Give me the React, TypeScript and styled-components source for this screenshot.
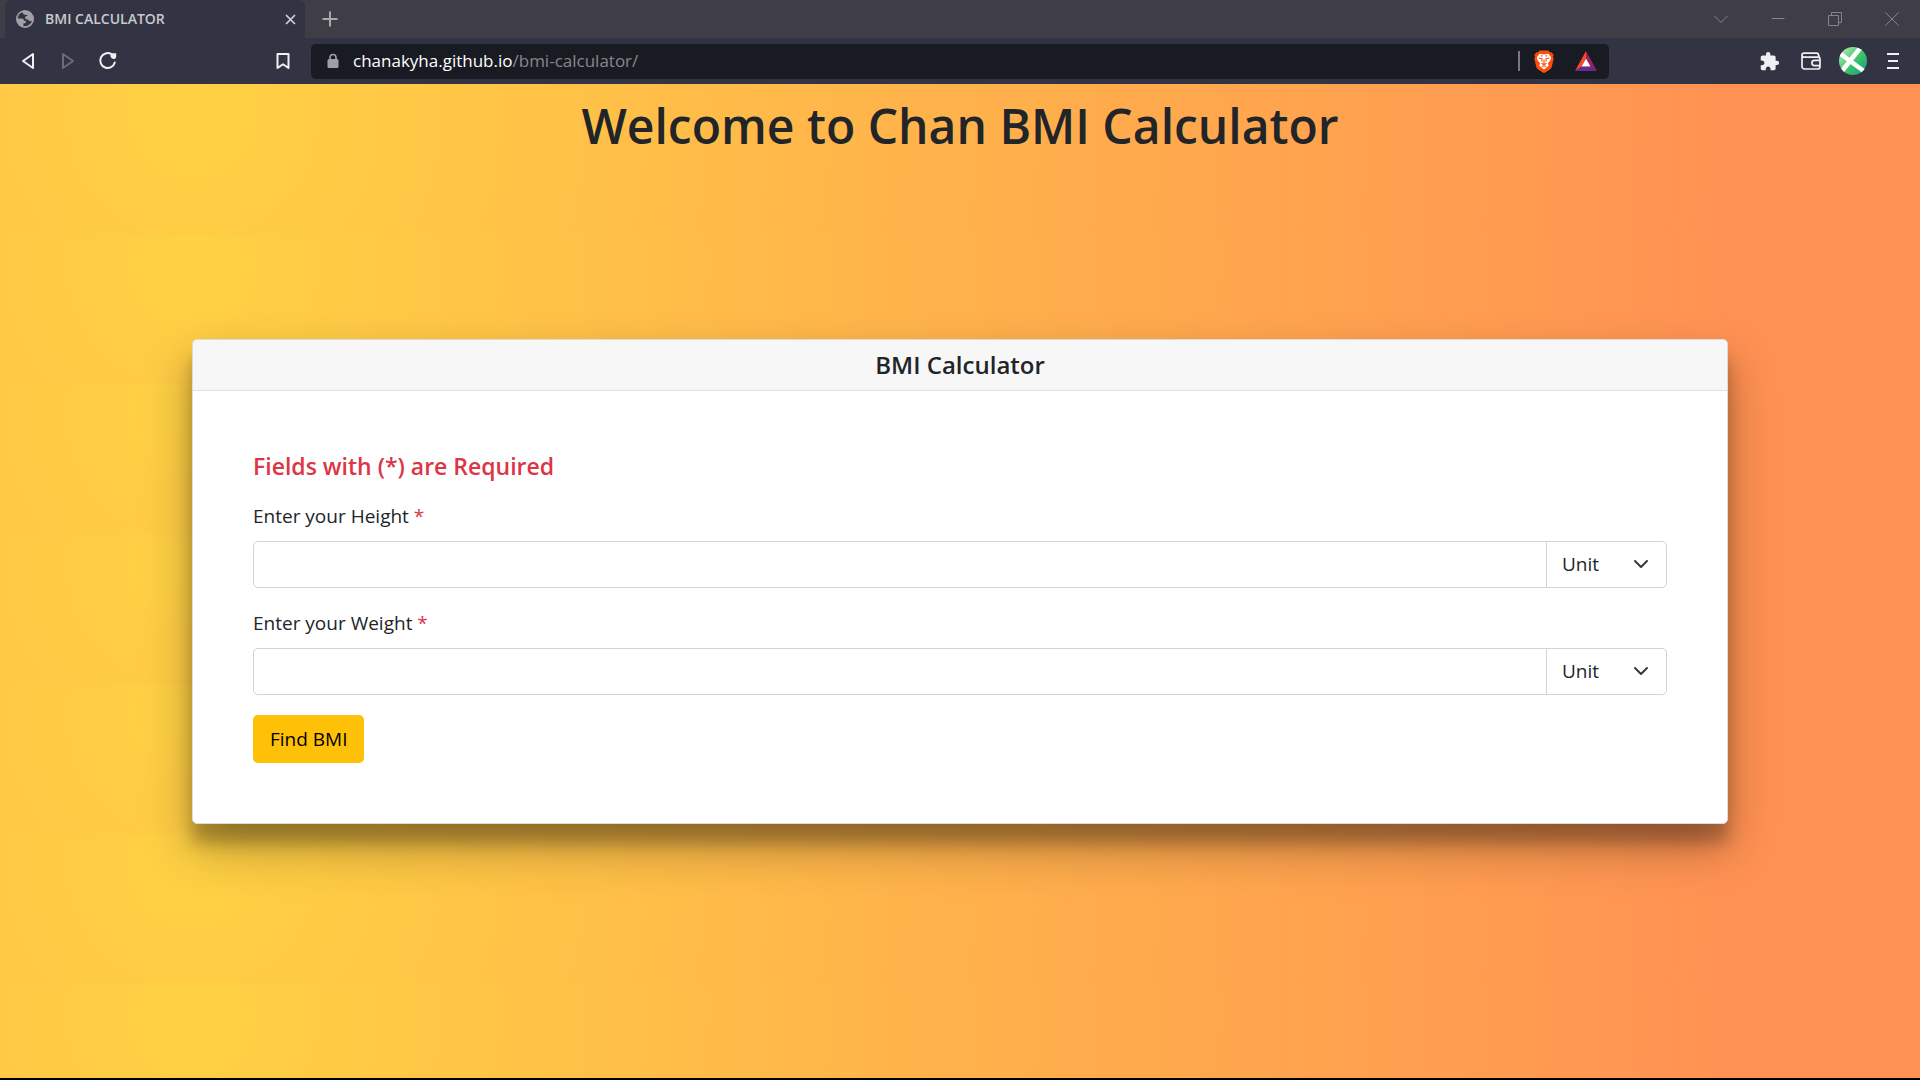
import React, { useState } from "react";
import styled, { createGlobalStyle } from "styled-components";

const GlobalStyle = createGlobalStyle`
  *, *::before, *::after { box-sizing: border-box; }
  body {
    margin: 0;
    color: #212529;
    font-family: "Open Sans", "Noto Sans", sans-serif;
    font-size: 19px;
    line-height: 30px;
  }
  h1, h2, h3 { margin: 0; font-weight: 600; }
`;

const Page = styled.div`
  min-height: 100vh;
  display: flex;
  flex-direction: column;
  border-bottom: 2px solid #000;
`;

const IconButton = styled.button<{ $w?: number; $color?: string }>`
  width: ${(p) => p.$w ?? 40}px;
  height: 38px;
  flex: none;
  padding: 0;
  border: 0;
  background: none;
  color: ${(p) => p.$color ?? "#f0f0f2"};
  display: flex;
  align-items: center;
  justify-content: center;
`;

const TabStrip = styled.div`
  height: 38px;
  padding-left: 5px;
  display: flex;
  align-items: center;
  background: #3f3e46;
`;

const Tab = styled.div`
  width: 300px;
  height: 38px;
  padding-left: 11px;
  display: flex;
  align-items: center;
  gap: 11px;
  border-radius: 6px 6px 0 0;
  background: #323443;
`;

const TabTitle = styled.span`
  flex: 1;
  color: #c9cacd;
  font-size: 14px;
  font-weight: 600;
  line-height: 20px;
`;

const Spacer = styled.div`
  flex: 1;
`;

const Toolbar = styled.div`
  height: 46px;
  display: grid;
  grid-template-columns: 311px 1fr 311px;
  align-items: center;
  background: #323443;
`;

const ToolGroup = styled.div<{ $end?: boolean }>`
  display: flex;
  align-items: center;
  justify-content: ${(p) => (p.$end ? "flex-end" : "flex-start")};
  padding: 0 8px;
`;

const Address = styled.div`
  height: 35px;
  padding: 0 2px 0 16px;
  display: flex;
  align-items: center;
  border-radius: 5px;
  background: #181b22;
`;

const Url = styled.div`
  flex: 1;
  margin-left: 14px;
  color: #86888c;
  font-size: 17px;
  line-height: 24px;
  outline: none;
`;

const Host = styled.span`
  color: #fff;
`;

const Divider = styled.div`
  width: 2px;
  height: 20px;
  margin-right: 3px;
  background: #77797e;
`;

const Main = styled.main`
  flex: 1;
  display: grid;
  grid-template-rows: 1fr auto 1fr;
  justify-items: center;
  background: radial-gradient(circle at 10% 20%, rgb(255, 209, 67) 0%, rgb(255, 145, 83) 90%) 0 0 / 100% 150px;
`;

const PageTitle = styled.h1`
  padding-top: 12px;
  font-size: 48px;
  line-height: 60px;
  text-align: center;
`;

const Card = styled.section`
  width: 80%;
  border: 1px solid #dcdcdc;
  border-radius: 5px;
  background: #fff;
  box-shadow: 0 24px 48px rgba(0, 0, 0, 0.3), 0 19px 15px rgba(0, 0, 0, 0.22);
`;

const CardTitle = styled.h2`
  padding: 10px;
  border-bottom: 1px solid #dfdfdf;
  border-radius: 4px 4px 0 0;
  background: #f7f7f7;
  font-size: 24px;
  line-height: 30px;
  text-align: center;
`;

const Form = styled.form`
  padding: 60px;
  display: flex;
  flex-direction: column;
  align-items: stretch;
  gap: 20px;
`;

const Notice = styled.h3`
  color: #dc3545;
  font-size: 23px;
  line-height: 30px;
`;

const Field = styled.div`
  display: flex;
  flex-direction: column;
  gap: 10px;
`;

const Star = styled.span`
  color: #dc3545;
`;

const InputGroup = styled.div`
  height: 47px;
  display: flex;
`;

const TextInput = styled.input`
  flex: 1;
  min-width: 0;
  padding: 0 15px;
  border: 1px solid #ced4da;
  border-radius: 5px 0 0 5px;
  background: #fff;
  color: inherit;
  font: inherit;
`;

const UnitSelect = styled.select`
  width: 121px;
  margin-left: -1px;
  padding: 0 45px 0 15px;
  border: 1px solid #ced4da;
  border-radius: 0 5px 5px 0;
  color: inherit;
  font: inherit;
  appearance: none;
  background: #fff
    url("data:image/svg+xml,%3csvg xmlns='http://www.w3.org/2000/svg' viewBox='0 0 16 16'%3e%3cpath fill='none' stroke='%23343a40' stroke-linecap='round' stroke-linejoin='round' stroke-width='2' d='M2 5l6 6 6-6'/%3e%3c/svg%3e")
    no-repeat right 17px center / 16px 16px;
`;

const SubmitButton = styled.button`
  align-self: flex-start;
  height: 48px;
  padding: 0 17px;
  border: 0;
  border-radius: 5px;
  background: #ffc107;
  color: #000;
  font: inherit;
`;

const Globe = () => (
  <svg width="18" height="18" viewBox="0 0 18 18">
    <circle cx="9" cy="9" r="9" fill="#9fa1a9" />
    <path d="M6.2 2.2C3.4 3.2 1.8 5.6 1.8 8.6l3.7 0c1.5 0 2.4.9 2.4 2.2h1.9v2.4H7.4v2.8c4 .8 7.8-1.8 8.5-5.3-1.1.7-2.6.6-3.4-.5-.5-.8-1.6-.6-2.7-1.2-1-.6-.9-2.2.2-2.7.6-.3 1.4 0 1.5-.8 0-.7-1.6-.5-2.6-.7-1.4-.3-2.2-1.5-2.7-2.6z" fill="#323443" />
  </svg>
);

const Back = ({ flip }: { flip?: boolean }) => (
  <svg width="14" height="18" viewBox="0 0 14 18" fill="none" stroke="currentColor" strokeWidth="2" strokeLinejoin="round">
    <path d={flip ? "M2 2v14l10-7z" : "M12 2v14L2 9z"} />
  </svg>
);

const Reload = () => (
  <svg width="20" height="20" viewBox="0 0 20 20" fill="none" stroke="currentColor" strokeWidth="2">
    <path d="M13.5 3.2A7.4 7.4 0 1 0 16.8 11.5" strokeLinecap="round" />
    <path d="M12.4 4.6c0-1.4 1-2.4 2.4-2.4h3.4v3.2c0 1.6-1.2 2.6-2.8 2.6s-3-1.6-3-3.4z" fill="currentColor" stroke="none" />
  </svg>
);

const BookmarkIcon = () => (
  <svg width="14" height="18" viewBox="0 0 14 18" fill="none" stroke="currentColor" strokeWidth="2" strokeLinejoin="round">
    <path d="M1.5 2h11v14L7 12.2 1.5 16z" />
  </svg>
);

const Lock = () => (
  <svg width="12" height="16" viewBox="0 0 12 16">
    <path d="M3 7V4.5a3 3 0 0 1 6 0V7" fill="none" stroke="#9d9fa7" strokeWidth="1.6" />
    <rect x="0.5" y="6" width="11" height="9" rx="1.5" fill="#9d9fa7" />
  </svg>
);

const Brave = () => (
  <svg width="20" height="23" viewBox="0 0 20 23">
    <path d="M5.8.5h8.4l1.9 2.1 1.6-.2 1.9 2.3-.7 1.9.8 2.1-2 8.3c-.3 1-.8 1.7-1.6 2.3l-4.9 3.2c-.8.5-1.6.5-2.4 0L3.9 19.3c-.8-.6-1.3-1.3-1.6-2.3L.3 8.7l.8-2.1L.4 4.7l1.9-2.3 1.6.2z" fill="#fb4f10" />
    <path d="M10 4.4l2.7-.5 1.6-.2 2.9 3.7-.5 1.3.2.9-3.1 3.9 1 2-4.8 3.9-4.8-3.9 1-2-3.1-3.9.2-.9-.5-1.3 2.9-3.7 1.6.2z" fill="#fff" />
    <path d="M4.6 8l3.3.8.2 2.8M15.4 8l-3.3.8-.2 2.8M6.8 5.6l1.7.7M13.2 5.6l-1.7.7M10 9.5v4.5M7.5 13.3L10 14.8l2.5-1.5M8 16.8l2-1.3 2 1.3" fill="none" stroke="#fb4f10" strokeWidth="1.1" />
  </svg>
);

const Bat = () => (
  <svg width="22" height="20" viewBox="0 0 22 20">
    <path d="M11 0v7L6.5 15.5 0 20z" fill="#ff4724" />
    <path d="M11 0l11 20-6.5-4.5L11 7z" fill="#9e1f63" />
    <path d="M0 20l6.5-4.5h9L22 20z" fill="#662d91" />
    <path d="M11 7.5l4.5 8h-9z" fill="#fff" />
  </svg>
);

const Puzzle = () => (
  <svg width="21" height="21" viewBox="0 0 24 24" fill="currentColor">
    <path d="M20.5 11H19V7c0-1.1-.9-2-2-2h-4V3.5a2.5 2.5 0 0 0-5 0V5H4c-1.1 0-2 .9-2 2v3.8h1.5c1.5 0 2.7 1.2 2.7 2.7S5 16.2 3.5 16.2H2V20c0 1.1.9 2 2 2h3.8v-1.5c0-1.5 1.2-2.7 2.7-2.7s2.7 1.2 2.7 2.7V22H17c1.1 0 2-.9 2-2v-4h1.5a2.5 2.5 0 0 0 0-5z" />
  </svg>
);

const WalletIcon = () => (
  <svg width="20" height="18" viewBox="0 0 20 18" fill="none" stroke="currentColor" strokeWidth="1.7">
    <path d="M18 5.5V4a2 2 0 0 0-1-1.2M1 3v11.5A2.5 2.5 0 0 0 3.5 17h13a2.5 2.5 0 0 0 2.5-2.5V7.2a2 2 0 0 0-2-2H3A2 2 0 0 1 3 1.2h12.5a2 2 0 0 1 2 2" />
    <path d="M19 8.4h-5.5a2.6 2.6 0 0 0 0 5.2H19" />
  </svg>
);

const Avatar = () => (
  <svg width="28" height="28" viewBox="0 0 28 28">
    <defs>
      <linearGradient id="leaf" x1="0" y1="0" x2="1" y2="1">
        <stop offset="0" stopColor="#c4edc4" />
        <stop offset="0.5" stopColor="#45c767" />
        <stop offset="1" stopColor="#0c9a83" />
      </linearGradient>
      <clipPath id="round">
        <circle cx="14" cy="14" r="14" />
      </clipPath>
    </defs>
    <g clipPath="url(#round)">
      <rect width="28" height="28" fill="url(#leaf)" />
      <path d="M-1 5L26 25M22 0L3 24" stroke="#fff" strokeWidth="4.6" />
    </g>
  </svg>
);

const MenuIcon = () => (
  <svg width="12" height="18" viewBox="0 0 12 18" stroke="currentColor" strokeWidth="2">
    <path d="M0 2h12M1 9h10M0 16h12" />
  </svg>
);

const Glyph = ({ d, size = 14, width = 1 }: { d: string; size?: number; width?: number }) => (
  <svg width={size} height={size} viewBox={`0 0 ${size} ${size}`} fill="none" stroke="currentColor" strokeWidth={width}>
    <path d={d} />
  </svg>
);

const WINDOW_BUTTONS = [
  { label: "Search tabs", d: "M.5 4l6.5 6.5L13.5 4" },
  { label: "Minimize", d: "M.5 6.5h13" },
  { label: "Restore", d: "M.5 3.5h10v10h-10zM3.5 3.5v-3h10v10h-3" },
  { label: "Close", d: "M.5 .5l13 13M13.5 .5l-13 13" },
];

function Measurement({ name, units }: { name: string; units: string[] }) {
  const id = name.toLowerCase();
  const [value, setValue] = useState("");
  return (
    <Field>
      <label htmlFor={id}>
        Enter your {name} <Star>*</Star>
      </label>
      <InputGroup>
        <TextInput id={id} value={value} onChange={(e) => setValue(e.target.value)} />
        <UnitSelect aria-label={`${name} unit`} defaultValue="">
          <option value="">Unit</option>
          {units.map((u) => (
            <option key={u}>{u}</option>
          ))}
        </UnitSelect>
      </InputGroup>
    </Field>
  );
}

export default function App() {
  return (
    <Page>
      <GlobalStyle />
      <header>
        <TabStrip>
          <Tab>
            <Globe />
            <TabTitle>BMI CALCULATOR</TabTitle>
            <IconButton $w={30} $color="#d6d7da" aria-label="Close tab">
              <Glyph d="M1 1l9 9M10 1L1 10" size={11} width={1.6} />
            </IconButton>
          </Tab>
          <IconButton $w={50} $color="#a9a9ad" aria-label="New tab">
            <Glyph d="M8 .5v15M.5 8h15" size={16} width={2} />
          </IconButton>
          <Spacer />
          {WINDOW_BUTTONS.map((b) => (
            <IconButton key={b.label} $w={57} $color="#858589" aria-label={b.label}>
              <Glyph d={b.d} />
            </IconButton>
          ))}
        </TabStrip>
        <Toolbar>
          <ToolGroup>
            <IconButton aria-label="Back"><Back /></IconButton>
            <IconButton $color="#6a6b76" aria-label="Forward"><Back flip /></IconButton>
            <IconButton aria-label="Reload"><Reload /></IconButton>
            <Spacer />
            <IconButton aria-label="Bookmark"><BookmarkIcon /></IconButton>
          </ToolGroup>
          <Address>
            <Lock />
            <Url role="textbox" aria-label="Address" contentEditable suppressContentEditableWarning spellCheck={false}>
              <Host>chanakyha.github.io</Host>/bmi-calculator/
            </Url>
            <Divider />
            <IconButton $w={42} aria-label="Brave Shields"><Brave /></IconButton>
            <IconButton $w={42} aria-label="Brave Rewards"><Bat /></IconButton>
          </Address>
          <ToolGroup $end>
            <IconButton $w={42} aria-label="Extensions"><Puzzle /></IconButton>
            <IconButton $w={42} aria-label="Wallet"><WalletIcon /></IconButton>
            <IconButton $w={42} aria-label="Profile"><Avatar /></IconButton>
            <IconButton $w={38} aria-label="Menu"><MenuIcon /></IconButton>
          </ToolGroup>
        </Toolbar>
      </header>
      <Main>
        <PageTitle>Welcome to Chan BMI Calculator</PageTitle>
        <Card>
          <CardTitle>BMI Calculator</CardTitle>
          <Form onSubmit={(e) => e.preventDefault()}>
            <Notice>Fields with (*) are Required</Notice>
            <Measurement name="Height" units={["cm", "m", "ft"]} />
            <Measurement name="Weight" units={["kg", "lb"]} />
            <SubmitButton type="submit">Find BMI</SubmitButton>
          </Form>
        </Card>
      </Main>
    </Page>
  );
}
